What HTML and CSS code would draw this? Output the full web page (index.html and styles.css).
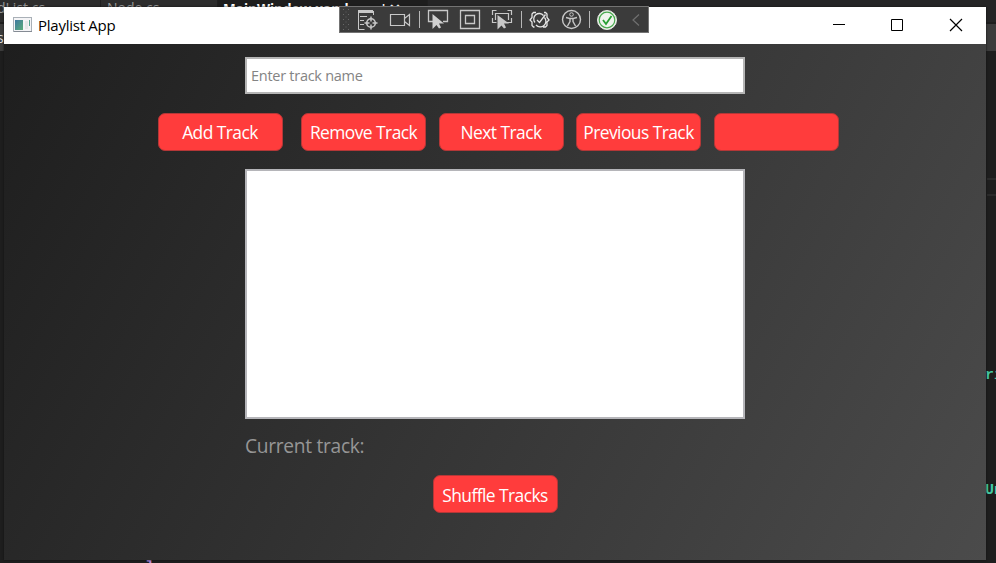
FILE: index.html
```
<!DOCTYPE html>
<html lang="en">
<head>
<meta charset="utf-8">
<title>Playlist App</title>
<link rel="stylesheet" href="styles.css">
</head>
<body>
<div class="editor">
  <div class="tabs"><span class="tab tab-list">dList.cs</span><span class="tab tab-node">Node.cs</span><span class="tab tab-active">MainWindow.xaml.cs&nbsp; ⊣ ✕</span></div>
  <div class="subbar">s</div>
  <span class="rule rule-a"></span><span class="rule rule-b"></span>
  <span class="code code-a">ri</span><span class="code code-b">Un</span><span class="code code-c">]</span>
</div>
<main class="window">
  <header class="titlebar">
    <svg class="appicon" width="20" height="17" viewBox="0 0 20 17"><defs><linearGradient id="g" x2="1" y2="1"><stop stop-color="#3f78a0"/><stop offset="1" stop-color="#59ad79"/></linearGradient></defs><rect x=".5" y=".5" width="18" height="14" fill="#f4f4f6" stroke="#a9b0b7"/><path d="M1 14.500h18" stroke="#858b94"/><rect x="2" y="3" width="8" height="10" fill="url(#g)"/><path d="M12 4h3v8h-3z" fill="#e4e8e8"/><path d="M16.500 3v6" stroke="#58a591"/></svg>
    <h1>Playlist App</h1>
    <svg class="controls" width="174" height="37" viewBox="0 0 174 37" fill="none" stroke="#000" stroke-width="1"><path d="M21 17.500h12"/><path d="M79.500 12.500h11v11h-11z"/><path d="M138 12l12 12M150 12l-12 12" stroke-width="1.200"/></svg>
  </header>
  <section class="content">
    <input class="entry" aria-label="Track name" placeholder="Enter track name">
    <div class="buttons"><button class="add">Add Track</button><button>Remove Track</button><button>Next Track</button><button class="previous">Previous Track</button><button aria-label="Track action"></button></div>
    <div class="tracks"></div>
    <p class="current">Current track:</p>
    <button class="shuffle">Shuffle Tracks</button>
  </section>
</main>
<svg class="debugbar" width="310" height="27" viewBox="0 0 310 27" fill="none" stroke="#c8c8c8">
  <rect x=".5" y=".5" width="309" height="26" fill="#3b3b3b" stroke="#737373"/>
  <path d="M4.500 3v21M9.500 3v21" stroke="#686868" stroke-dasharray="1 4"/><path d="M7 5.500v18" stroke="#626262" stroke-dasharray="1 4"/>
  <path d="M19 5.500h15" stroke-width="3"/><path d="M19.500 4v19.500h6M34.500 5v4M21 10.500h7M21 14.500h4M21 18.500h4"/>
  <circle cx="32" cy="17" r="4.300" stroke-width="1.600"/><path d="M32 10.500v5M32 18.500v5M25.500 17h5M33.500 17h5" stroke-width="1.500"/>
  <path d="M51.500 8.500h14v11h-14zM65.500 12.500l5-4v11l-5-4" stroke-width="1.200"/>
  <path d="M80.500 5v17M182.500 5v17M250.500 5v17" stroke="#b7b7b7"/>
  <path d="M94 15.500h-4.500v-11h19v11H104" stroke-width="1.300"/><path d="M93.500 8v15l4-4 2.500 3.500 2-1-2-4h5z" fill="#d0d0d0" stroke="none"/>
  <path d="M121.500 4.500h19v18h-19zM126.500 9.500h9v8h-9z" stroke-width="1.300"/>
  <path d="M153.500 9V4.500h4M168.500 4.500h4V9M153.500 12v4.500h4M172.500 12v4.500h-5M156.500 14V7.500h13V14" stroke-width="1.200"/><path d="M158.500 9v14.500l4-4 2.500 3 2-1-2-4h5z" fill="#c8c8c8" stroke="none"/>
  <path d="M197 6.500h-2.500l-1.500 1.500v3.500l-2 2.500 2 2v3.500l1.500 1.500h1M205 6.500h1.500l1.500 1.500v3.500l2 2.500-2 2v3.500l-1.500 1.500h-2.500M204.500 9.500a5.500 5.500 0 0 0-8.500 7M197 19a5.500 5.500 0 0 0 8.500-7.500M198 14l2.500 2.500 6-8" stroke="#e5e5e5" stroke-width="1.300"/>
  <circle cx="232.500" cy="13.500" r="9" stroke-width="1.400"/><circle cx="232.500" cy="8.500" r="1.800" fill="#3b3b3b"/><path d="M227 11.500l4 1v3l-2.500 4.500M238 11.500l-4 1v3l2.500 4.500M231 12.500h3" stroke-width="1.400"/>
  <circle cx="268" cy="14" r="9.500" fill="#f0f4ee" stroke="#e5e9e2"/><circle cx="268" cy="14" r="7.800" stroke="#49a84e" stroke-width="1.200"/><path d="M264 14l3 4 5.500-8" stroke="#279e32" stroke-width="1.800"/>
  <path d="M300 8.500l-6 5.500 6 5.500" stroke="#707070" stroke-width="1.200"/>
</svg>
</body>
</html>
```
FILE: styles.css
```
* { box-sizing: border-box; }
body { margin: 0; width: 996px; height: 563px; overflow: hidden; position: relative; background: #1e1e1e; font-family: "Open Sans", sans-serif; }
.editor { position: absolute; inset: 0; overflow: hidden; }
.tabs { height: 22px; display: flex; background: #252526; font-size: 14px; line-height: 16px; }
.tab { height: 22px; overflow: hidden; background: #2d2d2d; color: #999; white-space: nowrap; border-right: 1px solid #202020; }
.tab-list { width: 101px; text-indent: -3px; }
.tab-node { width: 117px; padding-left: 6px; }
.tab-active { width: 210px; padding-left: 5px; background: #1e1e1e; color: #fff; font-weight: 700; font-size: 13.5px; padding-top: 1px; }
.subbar { margin-top: 2px; height: 27px; background: #3c3c3c; color: #ddd; font-size: 14px; line-height: 28px; text-indent: -3px; }
.rule { position: absolute; right: 0; width: 9px; height: 2px; background: #2b2b2b; }
.rule-a { top: 178px; }
.rule-b { top: 194px; }
.code { position: absolute; left: 985px; font: bold 15px/20px "Liberation Mono", monospace; color: #43c9a5; }
.code-a { top: 366px; }
.code-b { top: 481px; }
.code-c { left: 145px; top: 558px; color: #b58ae0; }
.window { position: absolute; left: 4px; top: 7px; width: 982px; height: 553px; box-shadow: 0 0 2px #111; }
.titlebar { display: flex; align-items: center; height: 37px; background: #fff; color: #000; }
.appicon { margin: 0 5px 0 9px; }
h1 { margin: 0; font-size: 15px; font-weight: 400; line-height: 37px; letter-spacing: -.25px; }
.controls { margin-left: auto; margin-right: 0; }
.content { height: 516px; background: linear-gradient(117.7deg, #1e1e1e, #4b4b4b); display: flex; flex-direction: column; align-items: center; padding-top: 13px; }
.entry { width: 500px; height: 37px; border: 2px solid #b5b5b5; background: #fff; padding: 0 4px; font: 14.5px "Open Sans", sans-serif; letter-spacing: -.27px; outline: 0; }
.entry::placeholder { color: #848484; opacity: 1; }
.buttons { display: flex; gap: 12.5px; margin: 18.5px 0 18.5px 6px; }
button { width: 125px; height: 38px; padding: 1px 0 0; border: 1px solid #b43737; border-radius: 7px; background: #ff3c3c; color: #fff; font: 17.4px "Open Sans", sans-serif; letter-spacing: -.55px; white-space: nowrap; }
.add { margin-right: 6px; }
.tracks { width: 500px; height: 250px; background: #fff; border: 2px solid #b5b5b9; }
.current { width: 500px; margin: 14px 0 16px; font-size: 19.2px; line-height: 26px; letter-spacing: -.3px; color: #969696; }
.debugbar { position: absolute; left: 339px; top: 6px; }
```
